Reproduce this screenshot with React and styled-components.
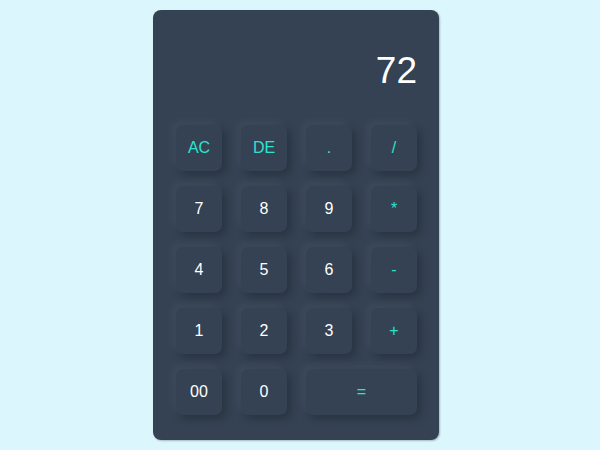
import React from "react";
import styled, { createGlobalStyle } from "styled-components";

const Global = createGlobalStyle`
  html, body { margin: 0; padding: 0; }
  body {
    background: #dbf7fd;
    font-family: "Liberation Sans", Arial, sans-serif;
  }
`;

const Page = styled.div`
  width: 600px;
  height: 450px;
  display: flex;
  justify-content: center;
  padding: 10px 8px 0 0;
  box-sizing: border-box;
`;

const Calc = styled.div`
  width: 286px;
  height: 430px;
  box-sizing: border-box;
  background: #344253;
  border-radius: 8px;
  padding: 0 22px 0 23px;
  display: flex;
  flex-direction: column;
  box-shadow: 1px 1px 2px rgba(0, 0, 0, 0.25);
`;

const Display = styled.div`
  height: 115px;
  display: flex;
  align-items: center;
  justify-content: flex-end;
  color: #ffffff;
  font-size: 37px;
  padding-top: 6px;
  box-sizing: border-box;
`;

const Keys = styled.div`
  display: grid;
  grid-template-columns: repeat(4, 46px);
  grid-auto-rows: 46px;
  column-gap: 19px;
  row-gap: 15px;
`;

const Key = styled.button`
  grid-column: span ${(p) => p.$span || 1};
  border: none;
  outline: none;
  background: #344253;
  border-radius: 7px;
  color: ${(p) => (p.$accent ? "#2de2cf" : "#ffffff")};
  font-family: "Liberation Sans", Arial, sans-serif;
  font-size: 16px;
  padding: 0;
  box-shadow: -4px -4px 9px rgba(255, 255, 255, 0.05),
    4px 4px 9px rgba(0, 0, 0, 0.22);
  cursor: pointer;
`;

const rows = [
  [["AC", 1, true], ["DE", 1, true], [".", 1, true], ["/", 1, true]],
  [["7"], ["8"], ["9"], ["*", 1, true]],
  [["4"], ["5"], ["6"], ["-", 1, true]],
  [["1"], ["2"], ["3"], ["+", 1, true]],
  [["00"], ["0"], ["=", 2, true]],
];

export default function App() {
  return (
    <Page>
      <Global />
      <Calc>
        <Display>72</Display>
        <Keys>
          {rows.flat().map(([label, span, accent], i) => (
            <Key key={i} $span={span} $accent={accent}>
              {label}
            </Key>
          ))}
        </Keys>
      </Calc>
    </Page>
  );
}
